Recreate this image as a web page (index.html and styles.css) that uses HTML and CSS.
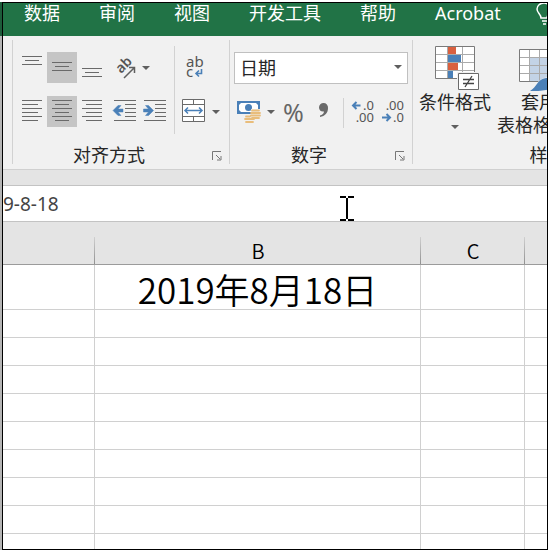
FILE: index.html
```html
<!DOCTYPE html>
<html lang="zh-CN">

<head>
    <meta charset="UTF-8">
    <meta name="viewport" content="width=device-width, initial-scale=1.0">
    <title>2019年8月18日</title>
    <link rel="stylesheet" href="styles.css">
</head>

<body>
    <div class="window">
        <!-- Tabs -->
        <nav class="tabs">
            <a href="#">数据</a>
            <a href="#">审阅</a>
            <a href="#">视图</a>
            <a href="#">开发工具</a>
            <a href="#">帮助</a>
            <a href="#">Acrobat</a>
            <a href="#" class="tell-me" aria-label="操作说明搜索">
                <svg width="16" height="22" fill="none" stroke="#fff" stroke-width="1.5">
                    <path d="M5 15c0-4-4-5-4-9a7 6 0 0 1 14 0c0 4-4 5-4 9zM6 18h5M7 21h3" />
                </svg>
            </a>
        </nav>

        <!-- Ribbon -->
        <div class="ribbon">
            <div class="group group-cut"></div>

            <!-- Alignment -->
            <section class="group">
                <div class="group-body">
                    <div class="tools">
                        <div class="tool-row">
                            <button class="tool" aria-label="顶端对齐">
                                <svg width="30" height="31" stroke="#6a6a6a"><path d="M5 4.5h20M8 8.5h14M5 12.5h20" /></svg>
                            </button>
                            <button class="tool active" aria-label="垂直居中">
                                <svg width="30" height="31" stroke="#6a6a6a"><path d="M5 10.5h20M8 14.5h14M5 18.5h20" /></svg>
                            </button>
                            <button class="tool" aria-label="底端对齐">
                                <svg width="30" height="31" stroke="#6a6a6a"><path d="M5 16.5h20M8 20.5h14M5 24.5h20" /></svg>
                            </button>
                            <button class="tool tool-menu orientation" aria-label="方向">
                                <svg width="22" height="24" fill="none" stroke="#5f5f5f" stroke-width="1.5">
                                    <text class="icon-text icon-text-bold" x="7" y="18" font-size="14" transform="rotate(-45 7 18)">ab</text>
                                    <path d="M10 22L20 12M15 11.500h5.500v5.500" />
                                </svg>
                                <svg class="caret" width="8" height="4"><path d="M0 0h8L4 4z" /></svg>
                            </button>
                        </div>
                        <div class="tool-row">
                            <button class="tool" aria-label="左对齐">
                                <svg width="30" height="31" stroke="#6a6a6a"><path d="M5 4.5h20M5 8.5h16M5 12.5h20M5 16.5h16M5 20.5h20M5 24.5h16" /></svg>
                            </button>
                            <button class="tool active" aria-label="居中">
                                <svg width="30" height="31" stroke="#6a6a6a"><path d="M5 4.5h20M8 8.5h14M5 12.5h20M8 16.5h14M5 20.5h20M8 24.5h14" /></svg>
                            </button>
                            <button class="tool" aria-label="右对齐">
                                <svg width="30" height="31" stroke="#6a6a6a"><path d="M5 4.5h20M9 8.5h16M5 12.5h20M9 16.5h16M5 20.5h20M9 24.5h16" /></svg>
                            </button>
                            <button class="tool indent" aria-label="减少缩进量">
                                <svg width="30" height="31" stroke="#6a6a6a">
                                    <path d="M4 4.5h22M15 8.5h11M15 12.5h11M15 16.5h11M15 20.5h11M4 24.5h22" />
                                    <path d="M3 14.5L8 9.500h3l-3 3.500h5v3H8l3 3.500H8z" fill="#4a80b8" stroke="#4a80b8" stroke-width=".5" />
                                </svg>
                            </button>
                            <button class="tool" aria-label="增加缩进量">
                                <svg width="30" height="31" stroke="#6a6a6a">
                                    <path d="M4 4.5h22M15 8.5h11M15 12.5h11M15 16.5h11M15 20.5h11M4 24.5h22" />
                                    <path d="M13.500 14.5L8.500 9.500h-3l3 3.500h-5v3h5l-3 3.500h3z" fill="#4a80b8" stroke="#4a80b8" stroke-width=".5" />
                                </svg>
                            </button>
                        </div>
                    </div>
                    <span class="divider"></span>
                    <div class="tools wrap-tools">
                        <button class="tool" aria-label="自动换行">
                            <svg width="24" height="31" fill="none">
                                <text class="icon-text" x="4" y="15" font-size="15">ab</text>
                                <text class="icon-text" x="4" y="25" font-size="15">c</text>
                                <path d="M19.5 17v4.5H14M17 18.5l-3 3 3 3" stroke="#4a80b8" stroke-width="1.6" />
                            </svg>
                        </button>
                        <button class="tool tool-menu" aria-label="合并后居中">
                            <svg width="24" height="31" fill="none" stroke="#6a6a6a">
                                <path d="M.5 3.5h22v22H.5zM.5 8.5h22M.5 20.5h22M11.5 3.5v5M11.5 20.5v5" fill="#fff" />
                                <path d="M3 14.5h17M6 11.5l-3 3 3 3M17 11.5l3 3-3 3" fill="none" stroke="#4a80b8" stroke-width="1.5" />
                            </svg>
                            <svg class="caret" width="8" height="4"><path d="M0 0h8L4 4z" /></svg>
                        </button>
                    </div>
                </div>
                <footer class="group-footer">
                    <span class="group-name">对齐方式</span>
                    <button class="launcher" aria-label="对齐设置">
                        <svg width="10" height="10" fill="none" stroke="#777"><path d="M.5 9V.5H9M4 4l4 4M9 5v4H5" /></svg>
                    </button>
                </footer>
            </section>

            <!-- Number -->
            <section class="group group-number">
                <div class="group-body">
                    <div class="tools">
                        <div class="format-box">
                            <select aria-label="数字格式">
                                <option>日期</option>
                            </select>
                            <svg class="caret" width="8" height="4"><path d="M0 0h8L4 4z" /></svg>
                        </div>
                        <div class="tool-row number-row">
                            <button class="tool tool-menu" aria-label="会计数字格式">
                                <svg width="24" height="24">
                                    <path d="M0 1h23v13H0z" fill="#4a80b8" />
                                    <path d="M4 3h15l2 2v5l-2 2H4l-2-2V5z" fill="#fff" />
                                    <circle cx="11.5" cy="7.5" r="3.5" fill="#4a80b8" />
                                    <path d="M14 9h9v9h-7v5H8v-7h6z" fill="#f1f1f1" />
                                    <path d="M15 10.5h7M14 13h9M14 15.5h9M15 18h7M9 16.5h4M8 19h9M9 22h7" stroke="#e9bd7b" stroke-width="1.8" stroke-linecap="round" />
                                </svg>
                                <svg class="caret" width="8" height="4"><path d="M0 0h8L4 4z" /></svg>
                            </button>
                            <button class="tool percent">%</button>
                            <button class="tool" aria-label="千位分隔样式">
                                <svg width="10" height="31" fill="#6a6a6a"><path d="M4.500 7A4.500 4.500 0 0 1 9 12c0 5-3 8-8 9v-1.500c3-1 4-2.500 4-4C2 16 0 14 0 11.500A4.500 4.500 0 0 1 4.500 7z" /></svg>
                            </button>
                            <span class="divider"></span>
                            <button class="tool" aria-label="增加小数位数">
                                <svg width="24" height="31" fill="none">
                                    <path d="M9.500 9.500H2M5.500 6L2 9.5 5.500 13" stroke="#4a80b8" stroke-width="2" />
                                    <text class="icon-text" x="23" y="14" font-size="13" text-anchor="end">.0</text>
                                    <text class="icon-text" x="23" y="26" font-size="13" text-anchor="end">.00</text>
                                </svg>
                            </button>
                            <button class="tool" aria-label="减少小数位数">
                                <svg width="24" height="31" fill="none">
                                    <text class="icon-text" x="23" y="14" font-size="13" text-anchor="end">.00</text>
                                    <text class="icon-text" x="23" y="26" font-size="13" text-anchor="end">.0</text>
                                    <path d="M1 21.5h8M5.500 18L9 21.5 5.500 25" stroke="#4a80b8" stroke-width="2" />
                                </svg>
                            </button>
                        </div>
                    </div>
                </div>
                <footer class="group-footer">
                    <span class="group-name">数字</span>
                    <button class="launcher" aria-label="数字格式设置">
                        <svg width="10" height="10" fill="none" stroke="#777"><path d="M.5 9V.5H9M4 4l4 4M9 5v4H5" /></svg>
                    </button>
                </footer>
            </section>

            <!-- Styles -->
            <section class="group group-styles">
                <div class="group-body">
                    <button class="big-tool">
                        <svg width="40" height="45">
                            <path d="M.5.5h39v32H.5z" fill="#fff" />
                            <path d="M13 1h8v7h-8zM13 17h10v7H13z" fill="#d9603f" />
                            <path d="M13 9h13v7H13zM13 25h5v7h-5z" fill="#4a80b8" />
                            <path d="M12.5 0v32M27.5 0v32M0 8.5h40M0 16.5h40M0 24.5h40" stroke="#aaa" />
                            <path d="M.5.5h39v32H.5z" fill="none" stroke="#7a7a7a" />
                            <path d="M22 26h22v19H22z" fill="#f1f1f1" />
                            <path d="M23.5 27.5h20v16h-20z" fill="#fff" stroke="#6a6a6a" />
                            <path d="M28 33.5h11M28 37.5h11M37 30l-7 11" stroke="#444" stroke-width="1.3" />
                        </svg>
                        <span>条件格式</span>
                        <svg class="caret" width="8" height="4"><path d="M0 0h8L4 4z" /></svg>
                    </button>
                    <button class="big-tool table-tool">
                        <svg width="40" height="45">
                            <path d="M.5 3.5h40v32H.5z" fill="#fff" stroke="#7a7a7a" />
                            <path d="M11 12h29v23H11z" fill="#c3d3e6" />
                            <path d="M10.5 4v31M20.5 4v31M30.5 4v31M1 11.5h39M1 19.5h39M1 27.5h39" stroke="#aaa" />
                            <path d="M10 46c6-3 7-14 20-15l10-6v20z" fill="#f1f1f1" />
                            <path d="M11 45c7-4 7-12 16-13 7 0 8 10 0 12-5 1-10 1-16 1z" fill="#4a80b8" />
                        </svg>
                        <span>套用</span>
                        <span class="with-caret">表格格式
                            <svg class="caret" width="8" height="4"><path d="M0 0h8L4 4z" /></svg>
                        </span>
                    </button>
                </div>
                <footer class="group-footer">
                    <span class="group-name">样式</span>
                </footer>
            </section>
        </div>

        <!-- Formula bar -->
        <div class="formula-bar">
            <input type="text" value="9-8-18" aria-label="编辑栏">
            <svg class="pointer" width="15" height="25" fill="none" stroke="#000" stroke-width="2">
                <path d="M0 1h6M8 1h6M0 24h6M8 24h6M7 2v21" />
            </svg>
        </div>

        <!-- Sheet -->
        <table class="sheet">
            <colgroup>
                <col class="col-a">
                <col class="col-b">
                <col class="col-c">
                <col>
            </colgroup>
            <thead>
                <tr><th></th><th>B</th><th>C</th><th></th></tr>
            </thead>
            <tbody>
                <tr class="first"><td></td><td>2019年8月18日</td><td></td><td></td></tr>
                <tr><td></td><td></td><td></td><td></td></tr>
                <tr><td></td><td></td><td></td><td></td></tr>
                <tr><td></td><td></td><td></td><td></td></tr>
                <tr><td></td><td></td><td></td><td></td></tr>
                <tr><td></td><td></td><td></td><td></td></tr>
                <tr><td></td><td></td><td></td><td></td></tr>
                <tr><td></td><td></td><td></td><td></td></tr>
                <tr><td></td><td></td><td></td><td></td></tr>
                <tr><td></td><td></td><td></td><td></td></tr>
            </tbody>
        </table>
    </div>
</body>

</html>
```
FILE: styles.css
```css
* {
    box-sizing: border-box;
}

body {
    margin: 0;
    padding: 2px 2px 0;
    background: linear-gradient(#fff 2px, #1d5c3a 2px, #1d5c3a 36px, #b5b5b5 36px) no-repeat 0 0 / 2px 100% #fff;
    font-family: "Noto Sans", "Noto Sans CJK SC", sans-serif;
    font-size: 18px;
    color: #262626;
}

button,
input,
select {
    margin: 0;
    padding: 0;
    border: 0;
    background: none;
    font: inherit;
    color: inherit;
}

svg {
    display: block;
    flex: none;
}

.window {
    height: calc(100vh - 2px);
    border: 1px solid #000;
    background: #fff;
    overflow: hidden;
}

/* Tabs */
.tabs {
    display: flex;
    gap: 39px;
    height: 33px;
    padding-left: 21px;
    background: #217346;
    line-height: 20px;
    white-space: nowrap;
    overflow: hidden;
}

.tabs a {
    color: #fff;
    text-decoration: none;
}

.tabs .tell-me {
    margin-left: -4px;
}

/* Ribbon */
.ribbon {
    display: flex;
    padding: 4px 0 5px;
    background: #f1f1f1;
    border-bottom: 1px solid #d0d0d0;
    overflow: hidden;
}

.group {
    display: flex;
    flex: none;
    flex-direction: column;
    width: 217px;
    height: 124px;
    border-right: 1px solid #d2d2d2;
}

.group-cut {
    width: 10px;
}

.group-number {
    width: 183px;
}

.group-styles {
    width: 270px;
}

.group-body {
    display: flex;
    flex: 1;
    padding: 6px 4px 0;
}

.tools {
    display: flex;
    flex-direction: column;
    gap: 13px;
    padding: 6px 0;
}

.tool-row {
    display: flex;
    height: 31px;
}

.tool {
    display: flex;
    align-items: center;
    height: 31px;
}

.active {
    background: #c5c5c5;
}

.tool-menu {
    gap: 6px;
}

.orientation {
    padding-left: 7px;
}

.indent {
    margin-left: 3px;
}

.caret {
    fill: #5f5f5f;
}

.icon-text {
    font-family: "Noto Sans", sans-serif;
    fill: #555;
    stroke: none;
}

.icon-text-bold {
    font-weight: 600;
}

.divider {
    width: 1px;
    height: 88px;
    margin-left: 4px;
    background: #d2d2d2;
}

.wrap-tools {
    padding-left: 7px;
}

.format-box {
    position: relative;
    width: 174px;
    height: 32px;
    margin-bottom: -1px;
}

.format-box select {
    width: 100%;
    height: 100%;
    padding-left: 5px;
    border: 1px solid #c0c0c0;
    background: #fff;
    appearance: none;
}

.format-box .caret {
    position: absolute;
    top: 13px;
    right: 6px;
}

.number-row {
    padding-left: 3px;
}

.number-row .divider {
    height: 30px;
    margin: 2px 7px 0 14px;
}

.number-row .divider ~ .tool + .tool {
    margin-left: 6px;
}

.percent {
    margin: 0 15px 0 8px;
    font-size: 25px;
    color: #666;
}

.big-tool {
    display: flex;
    flex-direction: column;
    align-items: center;
    width: 80px;
    margin-left: -2px;
    line-height: 23px;
    white-space: nowrap;
}

.big-tool svg {
    overflow: visible;
}

.big-tool > .caret {
    margin-top: 11px;
}

.table-tool {
    width: 84px;
    margin-left: 2px;
}

.with-caret {
    display: flex;
    align-items: center;
    gap: 4px;
}

.group-footer {
    display: flex;
    align-items: center;
    height: 18px;
    line-height: 18px;
}

.group-name {
    flex: 1;
    text-align: center;
}

.launcher {
    width: 24px;
    padding: 2px 0 0 7px;
}

/* Formula bar */
.formula-bar {
    position: relative;
    padding: 15px 0;
    background: #e4e4e4;
}

.formula-bar input {
    display: block;
    width: 100%;
    height: 37px;
    border: solid #c3c3c3;
    border-width: 1px 0;
    background: #fff;
    font-size: 19px;
    color: #444;
}

.pointer {
    position: absolute;
    top: 26px;
    left: 337px;
}

/* Sheet */
.sheet {
    width: 100%;
    table-layout: fixed;
    border-collapse: separate;
    border-spacing: 0;
    font-family: "Noto Sans CJK SC", sans-serif;
    font-weight: 350;
    color: #000;
}

.col-a {
    width: 92px;
}

.col-b {
    width: 326px;
}

.col-c {
    width: 104px;
}

.sheet th,
.sheet td {
    padding: 0;
    text-align: center;
}

.sheet th {
    height: 28px;
    padding-top: 16px;
    border-bottom: 1px solid #9b9b9b;
    background: linear-gradient(#d0d0d0, #909090) no-repeat right bottom / 1px 27px #e4e4e4;
    font-size: 20px;
    font-weight: 350;
    line-height: 26px;
}

.formula-bar {
    padding-bottom: 0;
}

.sheet td {
    height: 28px;
    border: solid #d0d0d0;
    border-width: 0 1px 1px 0;
}

.sheet th:last-child {
    background: #e4e4e4;
}

.sheet td:last-child {
    border-right: 0;
}

.sheet .first td {
    height: 45px;
    padding-top: 4px;
    font-size: 35px;
    line-height: 40px;
}
```
